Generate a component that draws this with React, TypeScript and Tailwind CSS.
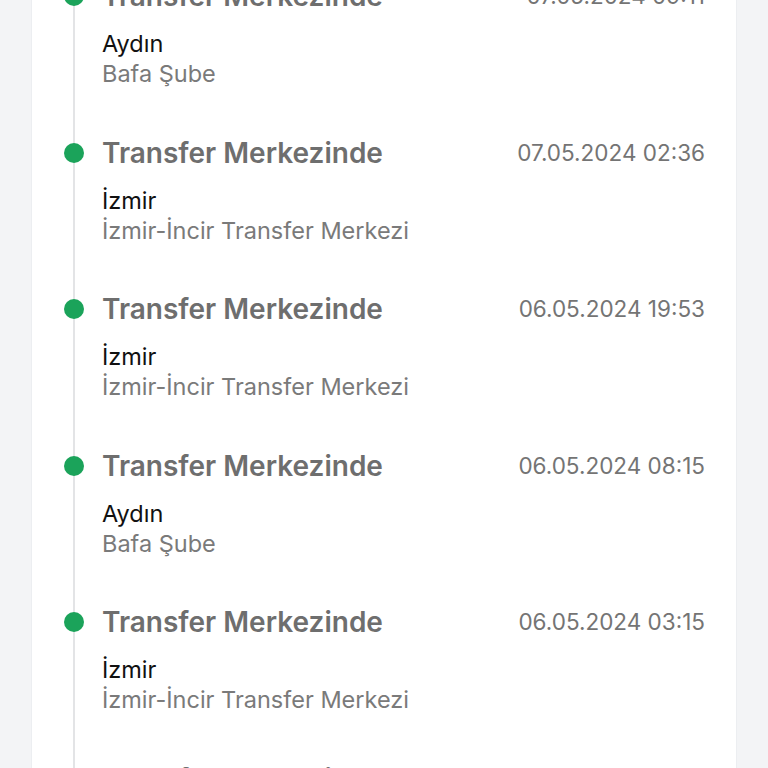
const events = [
  { title: "Transfer Merkezinde", date: "07.05.2024 09:11", city: "Aydın", place: "Bafa Şube" },
  { title: "Transfer Merkezinde", date: "07.05.2024 02:36", city: "İzmir", place: "İzmir-İncir Transfer Merkezi" },
  { title: "Transfer Merkezinde", date: "06.05.2024 19:53", city: "İzmir", place: "İzmir-İncir Transfer Merkezi" },
  { title: "Transfer Merkezinde", date: "06.05.2024 08:15", city: "Aydın", place: "Bafa Şube" },
  { title: "Transfer Merkezinde", date: "06.05.2024 03:15", city: "İzmir", place: "İzmir-İncir Transfer Merkezi" },
  { title: "Transfer Merkezinde", date: "04.05.2024 18:22", city: "İzmir", place: "İzmir-İncir Transfer Merkezi" },
];

export default function App() {
  return (
    <div
      className="h-[768px] overflow-hidden bg-[#f3f4f6]"
      style={{ fontFamily: "Inter, 'Noto Sans', sans-serif" }}
    >
      <div className="mx-[31px] -mt-[20px] bg-white border-x border-[#eceef1] pr-[31px]">
        <ol className="ml-[41px] border-l-2 border-[#e3e4e6]">
          {events.map((e, i) => (
            <li key={i} className="relative pl-[27px] pb-[47.6px]">
              {/* timeline dot */}
              <span className="absolute left-[-11px] top-[6px] h-[20px] w-[20px] rounded-full bg-[#1ba35a]" />
              <div className="flex items-center justify-between">
                <span className="text-[28px] leading-[32px] font-semibold text-[#6e6e6e]">
                  {e.title}
                </span>
                <span className="text-[22.5px] leading-[32px] text-[#747474]">{e.date}</span>
              </div>
              <div className="mt-[17px] text-[23.5px] leading-[30px] text-[#111111]">{e.city}</div>
              <div className="text-[23.5px] leading-[30px] text-[#7a7a7a]">{e.place}</div>
            </li>
          ))}
        </ol>
      </div>
    </div>
  );
}
